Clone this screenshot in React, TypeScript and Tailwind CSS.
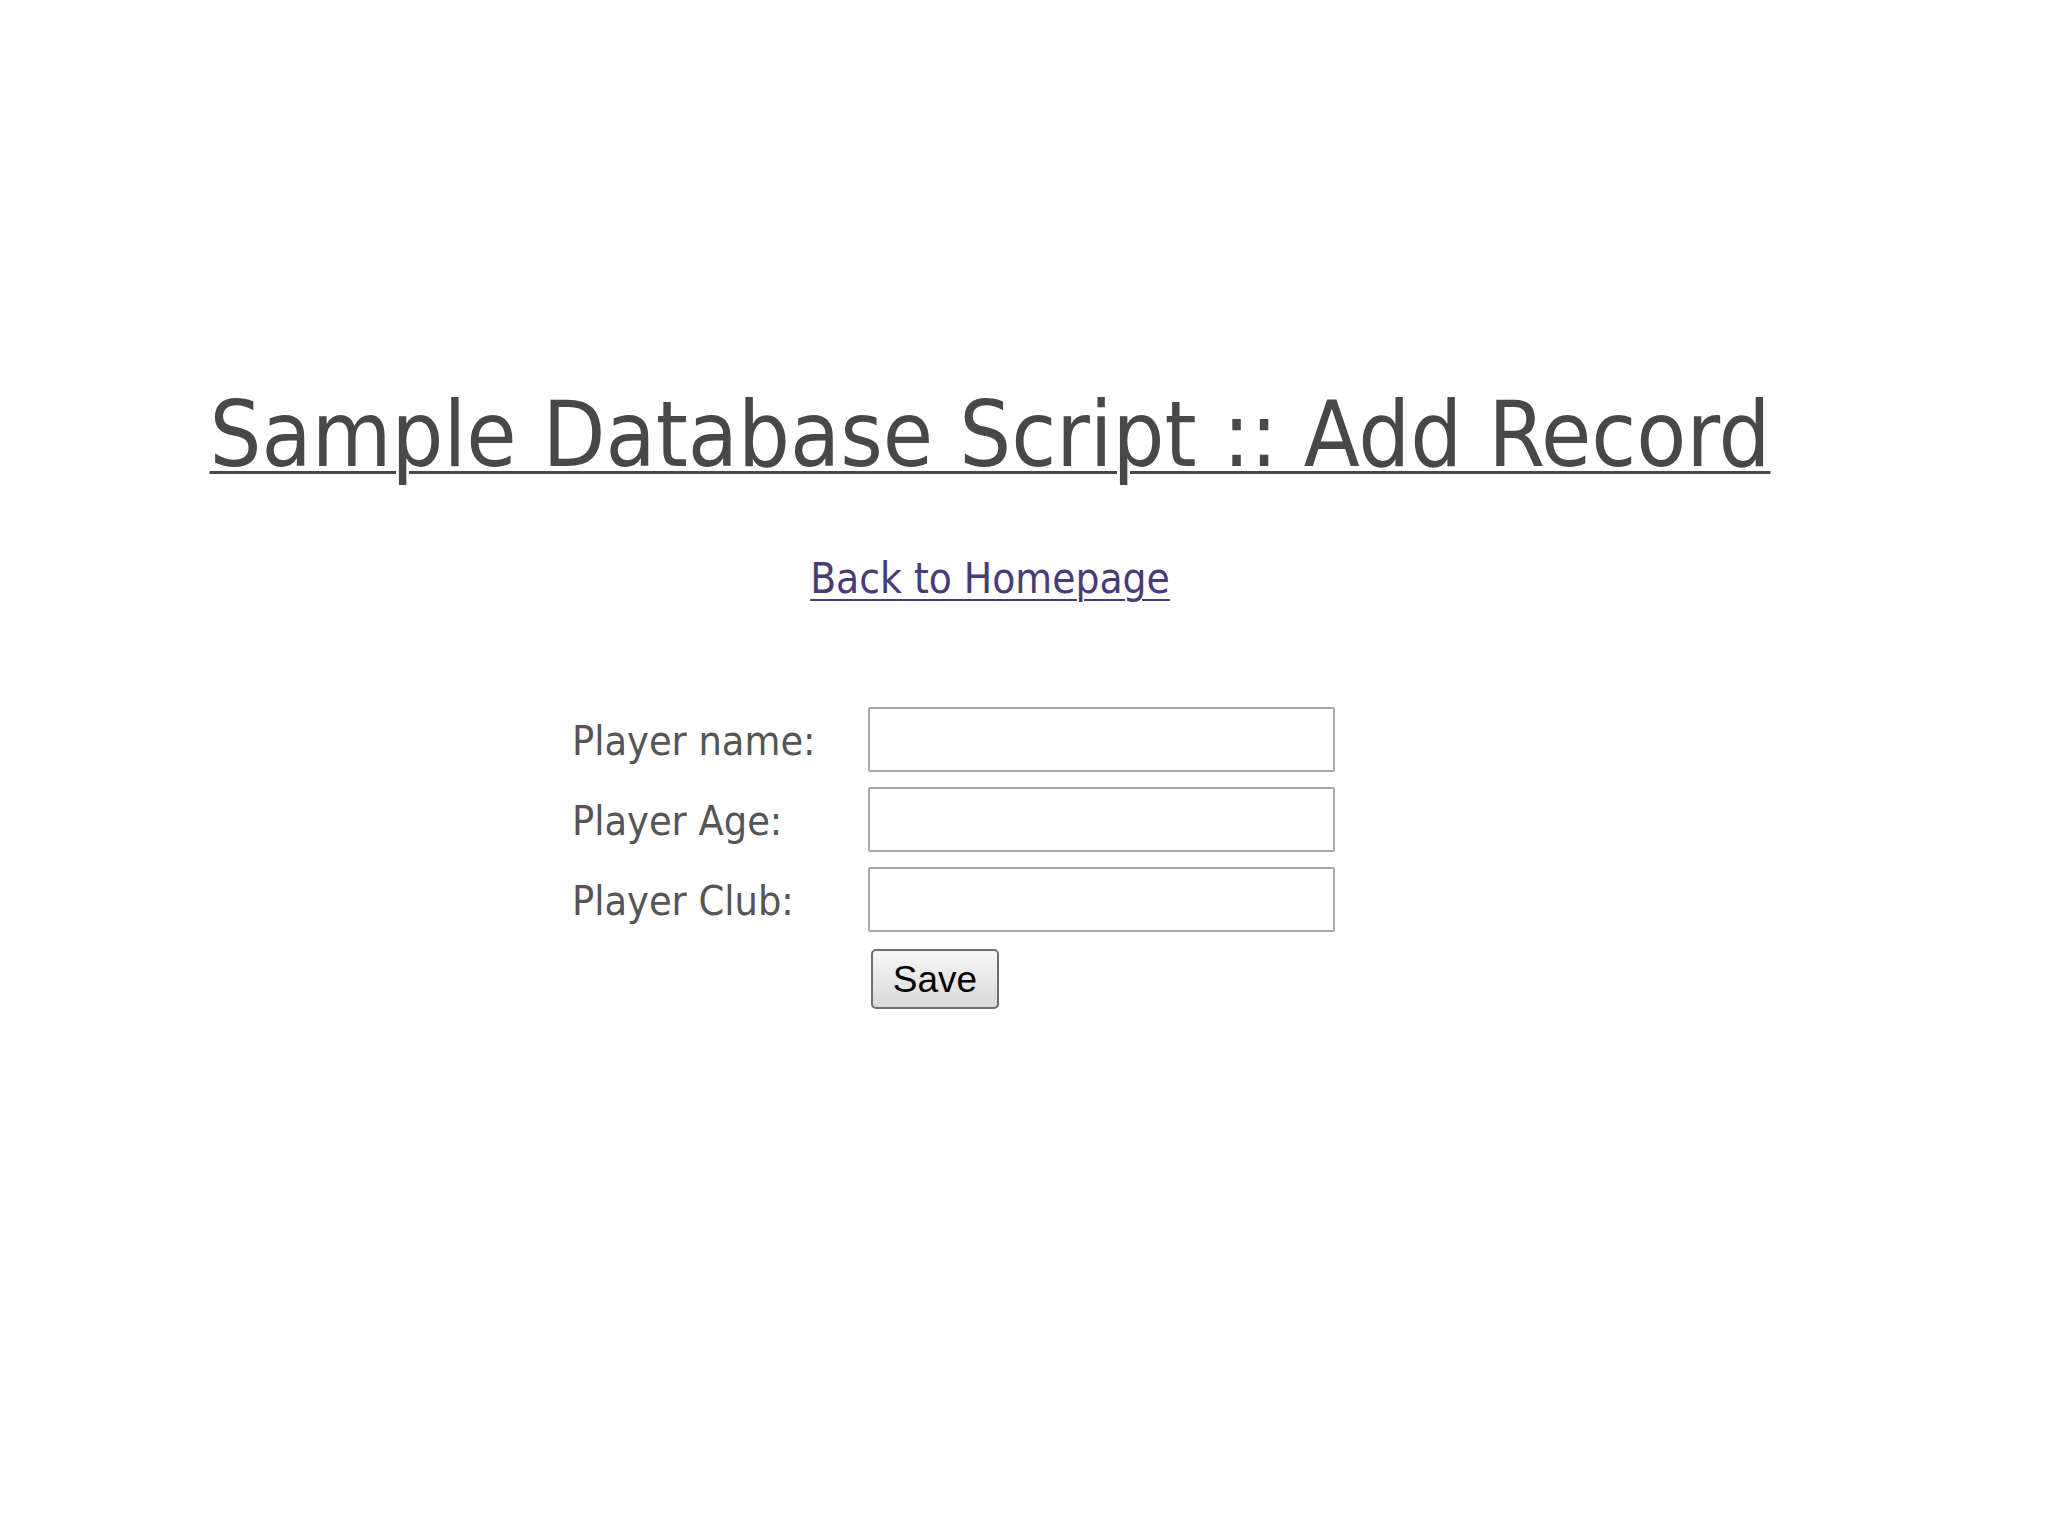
const fields = ['Player name:', 'Player Age:', 'Player Club:'];

export default function App() {
  return (
    <div className="min-h-screen bg-white font-['DejaVu_Sans_Condensed','DejaVu_Sans',sans-serif]">
      <div className="w-[1980px] pt-[389px] text-center">
        <h1 className="text-[91px] leading-none text-[#484848] underline decoration-[3px] underline-offset-[5px]">
          Sample Database Script :: Add Record
        </h1>
        <div className="mt-[78px]">
          <a href="#" className="text-[42px] leading-none text-[#4b3a78] underline decoration-2 underline-offset-[6px]">
            Back to Homepage
          </a>
        </div>
      </div>

      <form className="ml-[572px] mt-[107px] flex flex-col gap-[15px]">
        {fields.map((label) => (
          <div key={label} className="flex h-[65px] items-center">
            <label className="w-[296px] pt-[4px] text-[41px] leading-none text-[#555555]">{label}</label>
            <input
              type="text"
              className="h-[65px] w-[467px] rounded-[2px] border-2 border-[#a8a8a8] bg-white px-2 outline-none"
            />
          </div>
        ))}
        <div className="ml-[299px] mt-[2px]">
          <button
            type="button"
            className="h-[60px] w-[128px] rounded-[5px] border-2 border-[#6e6e6e] bg-gradient-to-b from-[#f7f7f7] to-[#d9d9d9] font-['Liberation_Sans',sans-serif] text-[37px] leading-none text-black"
          >
            Save
          </button>
        </div>
      </form>
    </div>
  );
}
